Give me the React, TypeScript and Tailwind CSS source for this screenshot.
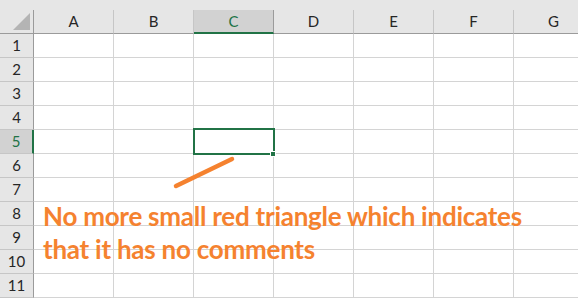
import React from "react";

const cols = ["A", "B", "C", "D", "E", "F", "G"];
const rows = [1, 2, 3, 4, 5, 6, 7, 8, 9, 10, 11];

export default function App() {
  return (
    <div className="relative w-[578px] h-[299px] overflow-hidden bg-white font-['Lato','Liberation_Sans',sans-serif]">
      <div className="h-[10px] bg-[#e6e6e6]" />
      {/* column headers */}
      <div className="flex h-[24px] bg-[#e6e6e6]">
        <div className="w-[34px] shrink-0 flex items-end justify-end pr-[3px] pb-[3px] border-r border-b border-[#9b9b9b]">
          <svg width="17" height="17" viewBox="0 0 17 17">
            <polygon points="17,0 17,17 0,17" fill="#b4b4b4" />
          </svg>
        </div>
        {cols.map((c) => (
          <div
            key={c}
            className={
              c === "C"
                ? "w-[80px] shrink-0 flex items-center justify-center bg-[#d2d2d2] border-r border-[#9b9b9b] border-b-2 border-b-[#217346] text-[#217346] text-[15px]"
                : "w-[80px] shrink-0 flex items-center justify-center border-r border-r-[#c6c6c6] border-b border-b-[#9b9b9b] text-[#262626] text-[15px]"
            }
          >
            {c}
          </div>
        ))}
      </div>
      {/* rows */}
      {rows.map((r) => (
        <div key={r} className="flex h-[24px]">
          <div
            className={
              r === 5
                ? "w-[34px] shrink-0 flex items-center justify-center bg-[#d2d2d2] border-r-2 border-r-[#217346] border-b border-b-[#c6c6c6] text-[#217346] text-[15px]"
                : "w-[34px] shrink-0 flex items-center justify-center bg-[#e6e6e6] border-r border-r-[#9b9b9b] border-b border-b-[#c6c6c6] text-[#262626] text-[15px]"
            }
          >
            {r}
          </div>
          {cols.map((c) => (
            <div key={c} className="w-[80px] shrink-0 border-r border-b border-[#d4d4d4]" />
          ))}
        </div>
      ))}

      {/* selected cell C5 */}
      <div className="absolute left-[193px] top-[128px] w-[82px] h-[27px] border-2 border-[#217346]" />
      <div className="absolute left-[270px] top-[151px] w-[6px] h-[6px] bg-[#217346] border border-white" />

      {/* annotation */}
      <svg className="absolute left-0 top-0" width="578" height="299">
        <line x1="176" y1="186" x2="232" y2="159" stroke="#f5822f" strokeWidth="4.5" strokeLinecap="round" />
      </svg>
      <div className="absolute left-[43px] top-[200px] font-bold text-[#f5822f] text-[26px] leading-[33px] tracking-[-0.25px]">
        <div>No more small red triangle which indicates</div>
        <div>that it has no comments</div>
      </div>
    </div>
  );
}
